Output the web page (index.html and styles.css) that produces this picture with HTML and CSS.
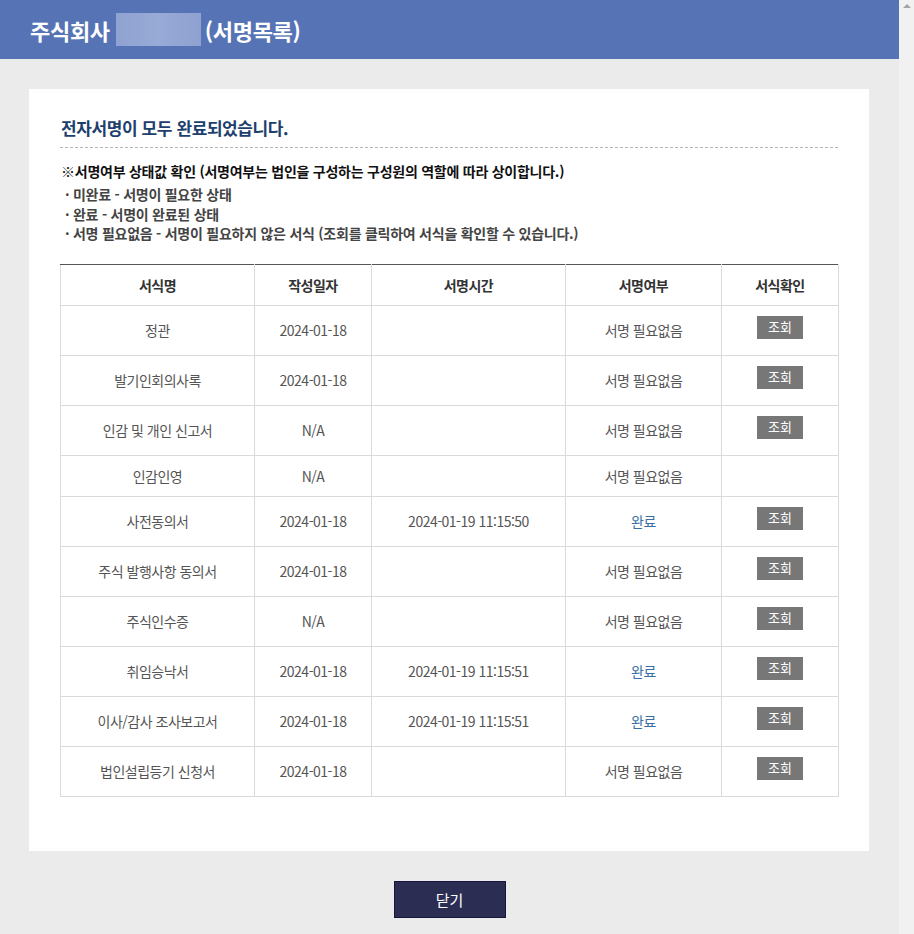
FILE: index.html
```html
<!DOCTYPE html>
<html lang="ko">
<head>
<meta charset="utf-8">
<title>서명목록</title>
<link rel="stylesheet" href="styles.css">
</head>
<body>
<div class="frame">
  <div class="page">
    <header class="top">
      <h1 class="top-title">주식회사<span class="blur"></span>(서명목록)</h1>
    </header>
    <main class="card">
      <h2 class="done">전자서명이 모두 완료되었습니다.</h2>
      <p class="note-head">※서명여부 상태값 확인 (서명여부는 법인을 구성하는 구성원의 역할에 따라 상이합니다.)</p>
      <ul class="notes">
        <li>· 미완료 - 서명이 필요한 상태</li>
        <li>· 완료 - 서명이 완료된 상태</li>
        <li>· 서명 필요없음 - 서명이 필요하지 않은 서식 (조회를 클릭하여 서식을 확인할 수 있습니다.)</li>
      </ul>
      <table class="list">
        <colgroup>
          <col class="c1"><col class="c2"><col class="c3"><col class="c4"><col class="c5">
        </colgroup>
        <thead>
          <tr><th>서식명</th><th>작성일자</th><th>서명시간</th><th>서명여부</th><th>서식확인</th></tr>
        </thead>
        <tbody>
          <tr><td>정관</td><td>2024-01-18</td><td></td><td>서명 필요없음</td><td><span class="view">조회</span></td></tr>
          <tr><td>발기인회의사록</td><td>2024-01-18</td><td></td><td>서명 필요없음</td><td><span class="view">조회</span></td></tr>
          <tr><td>인감 및 개인 신고서</td><td>N/A</td><td></td><td>서명 필요없음</td><td><span class="view">조회</span></td></tr>
          <tr><td>인감인영</td><td>N/A</td><td></td><td>서명 필요없음</td><td></td></tr>
          <tr><td>사전동의서</td><td>2024-01-18</td><td>2024-01-19 11:15:50</td><td class="ok">완료</td><td><span class="view">조회</span></td></tr>
          <tr><td>주식 발행사항 동의서</td><td>2024-01-18</td><td></td><td>서명 필요없음</td><td><span class="view">조회</span></td></tr>
          <tr><td>주식인수증</td><td>N/A</td><td></td><td>서명 필요없음</td><td><span class="view">조회</span></td></tr>
          <tr><td>취임승낙서</td><td>2024-01-18</td><td>2024-01-19 11:15:51</td><td class="ok">완료</td><td><span class="view">조회</span></td></tr>
          <tr><td>이사/감사 조사보고서</td><td>2024-01-18</td><td>2024-01-19 11:15:51</td><td class="ok">완료</td><td><span class="view">조회</span></td></tr>
          <tr><td>법인설립등기 신청서</td><td>2024-01-18</td><td></td><td>서명 필요없음</td><td><span class="view">조회</span></td></tr>
        </tbody>
      </table>
    </main>
    <div class="actions">
      <button class="close" type="button">닫기</button>
    </div>
  </div>
  <div class="scrollbar"><span class="arrow"></span></div>
</div>
</body>
</html>
```
FILE: styles.css
```css
html, body {
  margin: 0;
  padding: 0;
  height: 100%;
  overflow: hidden;
}
body {
  font-family: "Noto Sans CJK KR", "Noto Sans", sans-serif;
  color: #333;
  background: #ebebeb;
}
.frame {
  display: flex;
  height: 934px;
}
.page {
  flex: 1;
  background: #ebebeb;
  display: flex;
  flex-direction: column;
}
.scrollbar {
  width: 15px;
  background: #f1f1f1;
  display: flex;
  justify-content: center;
  padding-top: 4px;
  box-sizing: border-box;
}
.arrow {
  width: 0;
  height: 0;
  border-left: 4px solid transparent;
  border-right: 4px solid transparent;
  border-bottom: 4px solid #a3a3a3;
}
.top {
  height: 59px;
  background: #5674b5;
  display: flex;
  align-items: center;
  padding-left: 30px;
}
.top-title {
  margin: 0;
  font-size: 22px;
  font-weight: 700;
  color: #fff;
  letter-spacing: -0.3px;
  display: flex;
  align-items: center;
  line-height: 30px;
}
.blur {
  display: inline-block;
  width: 85px;
  height: 33px;
  margin: 0 4px 0 6px;
  background: linear-gradient(90deg, #8fa2d1, #98aad6 50%, #8ea1d0);
}
.card {
  width: 840px;
  box-sizing: border-box;
  margin: 30px 0 0 29px;
  background: #fff;
  padding: 28px 31px 54px;
}
.done {
  margin: 0;
  font-size: 17px;
  font-weight: 700;
  line-height: 22px;
  color: #1d3f6d;
  letter-spacing: -0.4px;
  padding: 0 0 8px 1px;
  border-bottom: 1px dashed #b5b5b5;
}
.note-head {
  margin: 13px 0 0 1px;
  font-size: 14px;
  line-height: 20px;
  font-weight: 700;
  color: #111;
  letter-spacing: -0.25px;
}
.notes {
  list-style: none;
  margin: 4px 0 0 5px;
  padding: 0;
  font-size: 14px;
  line-height: 19.5px;
  font-weight: 700;
  color: #444;
  letter-spacing: -0.25px;
}
.list {
  margin-top: 20px;
  width: 778px;
  border-collapse: collapse;
  table-layout: fixed;
  font-size: 14px;
  border-top: 1px solid #555;
}
.c1 { width: 194px; }
.c2 { width: 117px; }
.c3 { width: 194px; }
.c4 { width: 156px; }
.c5 { width: 117px; }
.list th,
.list td {
  border: 1px solid #dadada;
  padding: 10px 4px;
  line-height: 20px;
  text-align: center;
  vertical-align: middle;
  letter-spacing: -0.5px;
}
.list thead th {
  border-top: 1px solid #555;
  font-weight: 700;
  color: #333;
}
.list td {
  color: #555;
}
.list td.ok {
  color: #3b6ea6;
}
.view {
  display: inline-block;
  vertical-align: top;
  height: 23px;
  line-height: 21px;
  padding: 0 11px;
  margin-bottom: 6px;
  background: #777;
  color: #fff;
  font-size: 13px;
  letter-spacing: 0;
}
.actions {
  display: flex;
  justify-content: center;
  padding-top: 30px;
}
.close {
  width: 112px;
  height: 37px;
  background: #2c2d53;
  border: 1px solid #16163a;
  color: #fff;
  font-family: "Noto Sans CJK KR", sans-serif;
  font-size: 15px;
  padding: 0;
  cursor: pointer;
}
```
